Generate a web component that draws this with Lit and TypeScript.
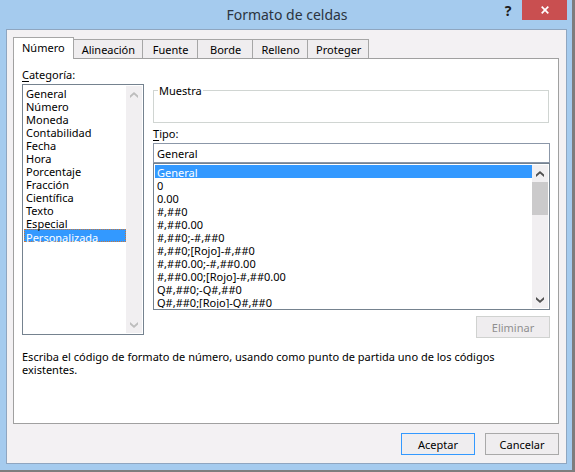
import { LitElement, html, css } from "lit";
import { customElement, property, state } from "lit/decorators.js";
import { classMap } from "lit/directives/class-map.js";

const TABS = ["Número", "Alineación", "Fuente", "Borde", "Relleno", "Proteger"];

const CATEGORIES = [
  "General", "Número", "Moneda", "Contabilidad", "Fecha", "Hora",
  "Porcentaje", "Fracción", "Científica", "Texto", "Especial", "Personalizada",
];

const FORMATS = [
  "General", "0", "0.00", "#,##0", "#,##0.00", "#,##0;-#,##0",
  "#,##0;[Rojo]-#,##0", "#,##0.00;-#,##0.00", "#,##0.00;[Rojo]-#,##0.00",
  "Q#,##0;-Q#,##0", "Q#,##0;[Rojo]-Q#,##0",
];

/** Vertical scroll bar with arrow buttons and an optional thumb. */
@customElement("scroll-track")
export class ScrollTrack extends LitElement {
  @property({ type: Boolean }) inactive = false;

  static styles = css`
    :host {
      display: flex;
      flex-direction: column;
      width: 16px;
      background: #f1eff1;
      color: #505050;
    }
    :host([inactive]) {
      color: #bdbdbd;
    }
    .arrow {
      display: grid;
      place-items: center;
      height: 17px;
      padding: 0;
      border: 0;
      background: none;
      color: inherit;
    }
    .rail {
      flex: 1;
    }
    .thumb {
      height: 33px;
      background: #cbcacb;
    }
    svg {
      display: block;
    }
  `;

  render() {
    return html`
      <button class="arrow" aria-label="Subir" ?disabled=${this.inactive}>
        <svg width="8" height="6" viewBox="0 0 8 6">
          <path d="M0 3.6 4 0 8 3.6V6L4 2.6 0 6Z" fill="currentColor" />
        </svg>
      </button>
      <div class="rail">${this.inactive ? "" : html`<div class="thumb"></div>`}</div>
      <button class="arrow" aria-label="Bajar" ?disabled=${this.inactive}>
        <svg width="8" height="6" viewBox="0 0 8 6">
          <path d="M0 2.4 4 6 8 2.4V0L4 3.4 0 0Z" fill="currentColor" />
        </svg>
      </button>
    `;
  }
}

@customElement("app-root")
export class AppRoot extends LitElement {
  @state() private tab = 0;
  @state() private category = "Personalizada";
  @state() private format = "General";

  static styles = css`
    :host {
      display: block;
      font: 11px/13px "Noto Sans", "Open Sans", sans-serif;
      color: #000;
    }
    * {
      box-sizing: border-box;
    }
    button,
    input,
    select {
      font: inherit;
      color: inherit;
      margin: 0;
      border-radius: 0;
      outline: none;
    }
    .window {
      display: flex;
      flex-direction: column;
      min-height: 100vh;
      padding: 0 5px 6px 6px;
      background: #a5cbee;
      border-right: 3px solid #7d7d7d;
      border-bottom: 2px solid #7d7d7d;
    }
    .titlebar {
      display: flex;
      height: 29px;
    }
    .title {
      flex: 1;
      margin: 0;
      padding-left: 74px;
      font-size: 14px;
      line-height: 29px;
      font-weight: 400;
      text-align: center;
      color: #2b3440;
    }
    .help,
    .close {
      display: grid;
      place-items: center;
      height: 20px;
      padding: 0;
      border: 0;
      background: none;
    }
    .help {
      width: 28px;
      font-size: 14px;
      font-weight: 700;
      color: #1c1c1c;
    }
    .close {
      width: 45px;
      background: #c94f50;
      color: #fff;
    }
    .body {
      flex: 1;
      display: flex;
      flex-direction: column;
      padding: 7px 7px 8px 6px;
      background: #f3f1f3;
      border: 1px solid #8fa6c0;
    }
    .tabs {
      display: flex;
      align-items: flex-end;
    }
    .tab {
      height: 19px;
      min-width: 55px;
      padding: 0 7px 0 8px;
      border: 1px solid #a6a6a6;
      border-width: 1px 1px 0 0;
      background: #efedef;
    }
    .tab.active {
      height: 22px;
      margin-bottom: -1px;
      padding: 0 8px 2px;
      border-left-width: 1px;
      background: #fff;
      position: relative;
    }
    .panel {
      flex: 1;
      padding: 9px 8px 8px;
      background: #fff;
      border: 1px solid #a0a0a0;
    }
    .columns {
      display: grid;
      grid-template-columns: 122px minmax(0, 1fr);
      column-gap: 9px;
    }
    .label {
      display: block;
      height: 16px;
    }
    .key {
      text-decoration: underline;
      text-underline-offset: 2px;
    }
    .listbox {
      display: flex;
      padding: 1px;
      background: #fff;
      border: 1px solid #75828f;
    }
    .categories {
      height: 251px;
    }
    .formats {
      height: 147px;
    }
    select {
      flex: 1;
      min-width: 0;
      height: 100%;
      padding: 0;
      border: 0;
      background: #fff;
      overflow: hidden;
      scrollbar-width: none;
    }
    option {
      height: 13px;
      min-height: 13px;
      padding: 0 2px;
      line-height: 13px;
      color: #000;
    }
    option:checked {
      color: #fff;
      background: #3399ff linear-gradient(#3399ff, #3399ff);
    }
    .categories option:checked {
      border: 1px dotted #c8783c;
      padding: 0 1px;
      line-height: 11px;
    }
    .sample {
      height: 39px;
      margin: 0 1px 4px 0;
      padding: 0;
      border: 1px solid #d0d5d2;
    }
    .sample legend {
      margin-left: 4px;
      padding: 0 1px;
    }
    .type {
      display: block;
      width: 100%;
      height: 20px;
      padding: 0 3px;
      border: 1px solid #8b97a8;
      background: #fff;
    }
    .right {
      display: flex;
      flex-direction: column;
      padding-top: 16px;
    }
    .push {
      width: 74px;
      height: 22px;
      padding: 0;
      border: 1px solid #a9a9a9;
      background: #efedef;
    }
    .push.default {
      border-color: #3399ff;
    }
    .push:disabled {
      align-self: flex-end;
      margin-top: 6px;
      color: #8f8f8f;
      border-color: #d0d2d0;
    }
    .hint {
      margin: 12px 40px 0 0;
    }
    .footer {
      display: flex;
      justify-content: flex-end;
      gap: 10px;
      padding-top: 9px;
    }
  `;

  private pickFormat(e: Event) {
    this.format = (e.target as HTMLSelectElement).value;
  }

  render() {
    return html`
      <main class="window">
        <header class="titlebar">
          <h1 class="title">Formato de celdas</h1>
          <button class="help" aria-label="Ayuda">?</button>
          <button class="close" aria-label="Cerrar">
            <svg width="8" height="8" viewBox="0 0 8 8">
              <path d="M.7.7 7.3 7.3M7.3.7.7 7.3" stroke="currentColor" stroke-width="1.7" />
            </svg>
          </button>
        </header>
        <div class="body">
          <div class="tabs" role="tablist">
            ${TABS.map(
              (name, i) => html`<button
                role="tab"
                class=${classMap({ tab: true, active: i === this.tab })}
                aria-selected=${i === this.tab}
                @click=${() => (this.tab = i)}
              >${name}</button>`
            )}
          </div>
          <section class="panel" role="tabpanel">
            <div class="columns">
              <div>
                <label class="label" for="category"><span class="key">C</span>ategoría:</label>
                <div class="listbox categories">
                  <select
                    id="category"
                    size="12"
                    @change=${(e: Event) => (this.category = (e.target as HTMLSelectElement).value)}
                  >
                    ${CATEGORIES.map((c) => html`<option ?selected=${c === this.category}>${c}</option>`)}
                  </select>
                  <scroll-track inactive></scroll-track>
                </div>
              </div>
              <div class="right">
                <fieldset class="sample"><legend>Muestra</legend></fieldset>
                <label class="label" for="type"><span class="key">T</span>ipo:</label>
                <input class="type" id="type" type="text" .value=${this.format} />
                <div class="listbox formats">
                  <select size="11" aria-label="Códigos de formato" @change=${this.pickFormat}>
                    ${FORMATS.map((f) => html`<option ?selected=${f === this.format}>${f}</option>`)}
                  </select>
                  <scroll-track></scroll-track>
                </div>
                <button class="push" disabled>Eliminar</button>
              </div>
            </div>
            <p class="hint">
              Escriba el código de formato de número, usando como punto de partida uno de los códigos existentes.
            </p>
          </section>
          <footer class="footer">
            <button class="push default">Aceptar</button>
            <button class="push">Cancelar</button>
          </footer>
        </div>
      </main>
    `;
  }
}
